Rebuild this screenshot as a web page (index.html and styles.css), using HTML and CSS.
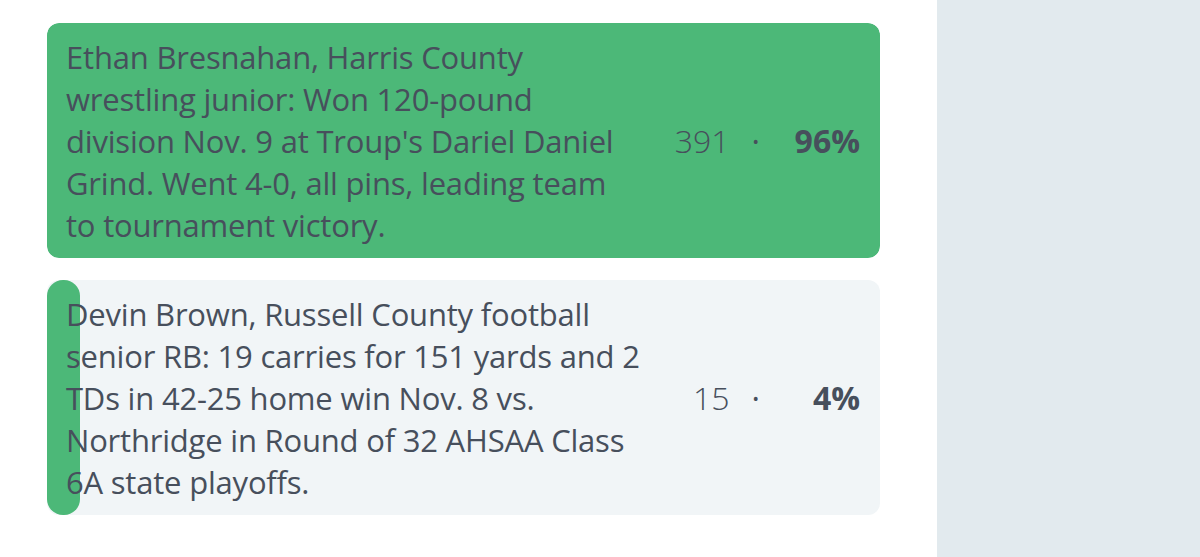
FILE: index.html
```html
<!DOCTYPE html>
<html>
<head>
  <meta charset="UTF-8">
  <meta name="viewport" content="width=device-width, initial-scale=1.0">
  <title>Player of the Week Poll</title>
  <link rel="stylesheet" href="styles.css">
</head>
<body>
  <div class="layout">
    <div class="poll">
      <div class="choice winner">
        <div class="choice-bar" style="width: 100%"></div>
        <div class="choice-text">Ethan Bresnahan, Harris County wrestling junior: Won 120-pound division Nov. 9 at Troup's Dariel Daniel Grind. Went 4-0, all pins, leading team to tournament victory.</div>
        <div class="stats">
          <span class="count">391</span>
          <span class="dot">·</span>
          <span class="pct">96%</span>
        </div>
      </div>

      <div class="choice">
        <div class="choice-bar" style="width: 4%"></div>
        <div class="choice-text">Devin Brown, Russell County football senior RB: 19 carries for 151 yards and 2 TDs in 42-25 home win Nov. 8 vs. Northridge in Round of 32 AHSAA Class 6A state playoffs.</div>
        <div class="stats">
          <span class="count">15</span>
          <span class="dot">·</span>
          <span class="pct">4%</span>
        </div>
      </div>
    </div>

    <div class="sidebar"></div>
  </div>
</body>
</html>
```

FILE: styles.css
```css
html, body {
  height: 100%;
}
body {
  margin: 0;
  font-family: "Open Sans", "Noto Sans", sans-serif;
  color: #474f5c;
  background: #fff;
}
.layout {
  display: flex;
  min-height: 100%;
}
.poll {
  flex: 1;
  display: flex;
  flex-direction: column;
  gap: 22px;
  padding: 23px 57px 0 47px;
}
.sidebar {
  width: 263px;
  background: #e2eaee;
}
.choice {
  position: relative;
  display: flex;
  align-items: center;
  height: 235px;
  box-sizing: border-box;
  padding: 0 20px 0 19px;
  background: #f1f5f7;
  border-radius: 12px;
  overflow: hidden;
}
.choice-bar {
  position: absolute;
  left: 0;
  top: 0;
  bottom: 0;
  background: #4cb878;
  border-radius: 16px;
}
.winner .choice-bar {
  border-radius: 12px;
}
.choice-text {
  position: relative;
  width: 575px;
  font-size: 31px;
  line-height: 42px;
  letter-spacing: -0.2px;
}
.stats {
  position: relative;
  margin-left: auto;
  display: flex;
  align-items: baseline;
  font-size: 32px;
}
.count {
  font-weight: 300;
  text-align: right;
}
.dot {
  margin: 0 28px 0 22px;
}
.pct {
  width: 72px;
  text-align: right;
  font-weight: 700;
}
```
